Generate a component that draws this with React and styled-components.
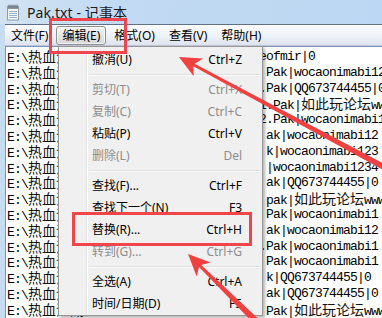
import React from 'react';
import styled, { createGlobalStyle } from 'styled-components';

const GlobalStyle = createGlobalStyle`
  html, body {
    margin: 0;
    padding: 0;
    background: #ffffff;
  }
`;

const Window = styled.div`
  position: relative;
  width: 382px;
  height: 318px;
  overflow: hidden;
  background: #c6dcf1;
  font-family: "Noto Sans", "Noto Sans CJK SC", sans-serif;
`;

const TitleBar = styled.div`
  height: 24px;
  display: flex;
  align-items: center;
  gap: 6px;
  padding-left: 5px;
  background: linear-gradient(100deg, #d2e3f3 0%, #c2daf2 30%, #bcd7f3 100%);
`;

const TitleText = styled.span`
  font-size: 14px;
  color: #1b1b1b;
  letter-spacing: 0.1px;
`;

const Client = styled.div`
  margin-left: 5px;
  display: flex;
  flex-direction: column;
  height: 294px;
`;

const MenuBar = styled.div`
  height: 20px;
  display: flex;
  align-items: center;
  gap: 2px;
  border-top: 1px solid #5f7186;
  border-bottom: 1px solid #c0c6d8;
  background: linear-gradient(#fbfcfe 0%, #eef1f7 55%, #dde3ef 100%);
`;

const MenuTitle = styled.div`
  height: 17px;
  display: flex;
  align-items: center;
  padding: 0 5px;
  font-size: 12px;
  color: #000;
  border: 1px solid ${p => (p.$open ? '#8e8f8f' : 'transparent')};
  border-radius: 3px;
  background: ${p => (p.$open ? 'linear-gradient(#f4f4f4, #e2e2e2 60%, #d6d6d6)' : 'transparent')};
  box-shadow: ${p => (p.$open ? 'inset 0 0 0 1px rgba(255,255,255,0.7)' : 'none')};
`;

const TextArea = styled.div`
  flex: 1;
  background: #ffffff;
  border-top: 1px solid #7b96b8;
  border-left: 1px solid #8a929c;
  padding: 2px 0 0 1px;
  overflow: hidden;
`;

const Line = styled.div`
  display: flex;
  height: 15.8px;
  line-height: 15.8px;
  white-space: pre;
  overflow: hidden;
  color: #000;
  font-family: "Liberation Mono", monospace;
  font-size: 13px;
  letter-spacing: -0.8px;
`;

const LeftPart = styled.span`
  width: 252px;
  flex-shrink: 0;
  overflow: hidden;
`;

const RightPart = styled.span`
  flex-shrink: 0;
`;

const Han = styled.span`
  font-family: "Noto Sans CJK SC", sans-serif;
  font-size: 14px;
  letter-spacing: 0;
  color: #111;
`;

const Dropdown = styled.div`
  position: absolute;
  left: 58px;
  top: 46px;
  width: 203px;
  padding: 1px 0;
  background: #f0f0f0;
  border: 1px solid #979797;
  box-shadow: 2px 2px 3px rgba(0, 0, 0, 0.3);
  font-size: 12px;
  &::before {
    content: '';
    position: absolute;
    left: 27px;
    top: 1px;
    bottom: 1px;
    width: 1px;
    background: #e2e3e3;
    box-shadow: 1px 0 0 #ffffff;
  }
`;

const Item = styled.div`
  height: 22px;
  display: flex;
  align-items: center;
  justify-content: space-between;
  padding: 0 20px 0 33px;
  color: ${p => (p.$disabled ? '#8d8d8d' : '#000')};
`;

const Separator = styled.div`
  height: 8px;
  display: flex;
  align-items: center;
  padding-left: 30px;
  padding-right: 2px;
  &::after {
    content: '';
    flex: 1;
    height: 1px;
    background: #e0e0e0;
    box-shadow: 0 1px 0 #ffffff;
  }
`;

const RedBox = styled.div`
  position: absolute;
  border: 3px solid #f0454a;
  box-sizing: border-box;
`;

const Overlay = styled.svg`
  position: absolute;
  left: 0;
  top: 0;
  pointer-events: none;
`;

const NotepadIcon = () => (
  <svg width="16" height="17" viewBox="0 0 16 17">
    <rect x="2.5" y="2.5" width="11" height="13.5" fill="#f7f7f2" stroke="#8e9aa6" />
    <rect x="3" y="3" width="10" height="2" fill="#9aa9b8" />
    {[7, 9, 11, 13].map(y => (
      <line key={y} x1="4" x2="12" y1={y + 0.5} y2={y + 0.5} stroke="#8fb2d6" />
    ))}
    {[4, 6, 8, 10, 12].map(x => (
      <rect key={x} x={x - 0.5} y="0.5" width="1" height="4" rx="0.5" fill="#5b6470" />
    ))}
  </svg>
);

const renderRuns = text =>
  text.split(/([\u4e00-\u9fff]+)/).map((part, i) =>
    /[\u4e00-\u9fff]/.test(part) ? <Han key={i}>{part}</Han> : part
  );

const tails = [
  'eofmir|0',
  ' Pak|wocaonimabi12',
  '.Pak|QQ673744455|0',
  '1.Pak|如此玩论坛www',
  '2.Pak|wocaonimabi1',
  ' ak|wocaonimabi12',
  ' k|wocaonimabi123',
  ' |wocaonimabi1234',
  ' ak|QQ673744455|0',
  ' pak|如此玩论坛www',
  ' Pak|wocaonimabi1',
  ' ak|wocaonimabi12',
  '.Pak|wocaonimabi1',
  ' Pak|wocaonimabi1',
  ' k|QQ673744455|0',
  ' ak|QQ673744455|0',
  ' Pak|如此玩论坛www',
  ' ak|wocaonimabi1',
];

const menus = [
  { label: '文件(F)' },
  { label: '编辑(E)', open: true },
  { label: '格式(O)' },
  { label: '查看(V)' },
  { label: '帮助(H)' },
];

const editItems = [
  { label: '撤消(U)', key: 'Ctrl+Z' },
  'sep',
  { label: '剪切(T)', key: 'Ctrl+X', disabled: true },
  { label: '复制(C)', key: 'Ctrl+C', disabled: true },
  { label: '粘贴(P)', key: 'Ctrl+V' },
  { label: '删除(L)', key: 'Del', disabled: true },
  'sep',
  { label: '查找(F)...', key: 'Ctrl+F' },
  { label: '查找下一个(N)', key: 'F3' },
  { label: '替换(R)...', key: 'Ctrl+H' },
  { label: '转到(G)...', key: 'Ctrl+G', disabled: true },
  'sep',
  { label: '全选(A)', key: 'Ctrl+A' },
  { label: '时间/日期(D)', key: 'F5' },
];

const App = () => (
  <Window>
    <GlobalStyle />
    <TitleBar>
      <NotepadIcon />
      <TitleText>Pak.txt - 记事本</TitleText>
    </TitleBar>
    <Client>
      <MenuBar>
        {menus.map(m => (
          <MenuTitle key={m.label} $open={m.open}>{m.label}</MenuTitle>
        ))}
      </MenuBar>
      <TextArea>
        {tails.map((tail, i) => (
          <Line key={i}>
            <LeftPart>{renderRuns('E:\\热血江湖\\data\\')}</LeftPart>
            <RightPart>{renderRuns(tail)}</RightPart>
          </Line>
        ))}
      </TextArea>
    </Client>

    <Dropdown>
      {editItems.map((it, i) =>
        it === 'sep' ? (
          <Separator key={i} />
        ) : (
          <Item key={i} $disabled={it.disabled}>
            <span>{it.label}</span>
            <span>{it.key}</span>
          </Item>
        )
      )}
    </Dropdown>

    <RedBox style={{ left: 49, top: 18, width: 78, height: 36 }} />
    <RedBox style={{ left: 72, top: 212, width: 180, height: 34 }} />

    <Overlay width="382" height="318" viewBox="0 0 382 318">
      <polygon
        fill="#f0403f"
        points="179,57 203.1,58.6 194.7,63.7 391.8,167.9 389,173.1 193.3,66.3 193.7,76.2"
      />
      <polygon
        fill="#f0403f"
        points="188,254 210.7,262.4 201.2,264.9 268.8,328.8 263.8,333.8 199,267.1 196.7,276.6"
      />
    </Overlay>
  </Window>
);

export default App;
